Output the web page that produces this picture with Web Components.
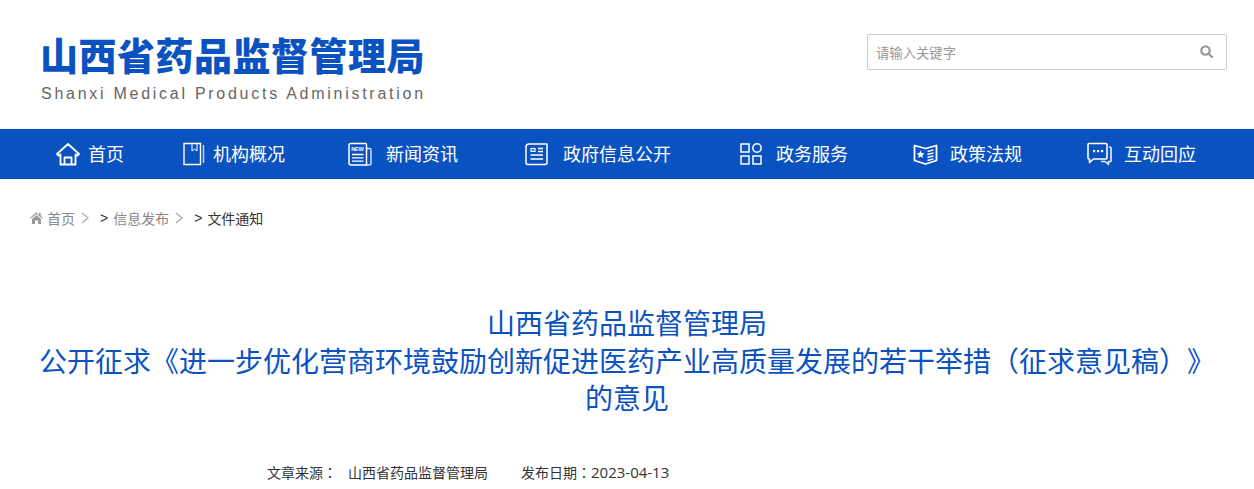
<!DOCTYPE html>
<html lang="zh-CN">
<head>
<meta charset="utf-8">
<title>山西省药品监督管理局</title>
<style>
  html, body { margin: 0; padding: 0; background: #fff; height: 489px; overflow: hidden; }
  body { font-family: "Noto Sans CJK SC", "Liberation Sans", sans-serif; color: #333; }
</style>
</head>
<body>
<site-header>
  <site-logo name="山西省药品监督管理局" en="Shanxi Medical Products Administration"></site-logo>
  <search-box placeholder="请输入关键字"></search-box>
</site-header>

<main-nav>
  <nav-item label="首页" w="127" gap="8">
    <svg slot="icon" width="24" height="24" viewBox="0 0 24 24" fill="none" stroke="#fff" stroke-width="1.800" stroke-linejoin="round" stroke-linecap="round"><path d="M1 12 12 2l11 10-1.800 1.800L19.500 12.500V22.500H4.500V12.500L2.800 13.800z"/><path d="M8.500 22v-6.500h7V22"/></svg>
  </nav-item>
  <nav-item label="机构概况" w="165" gap="8">
    <svg slot="icon" width="22" height="24" viewBox="0 0 22 24" fill="none" stroke="#fff" stroke-width="1.400"><path d="M1 1.500h16.500v21H1z"/><path d="M9 2v7l2.500-2L14 9V2" stroke-width="1"/><path d="M20.500 3v18" stroke-width="1.500" opacity=".75"/></svg>
  </nav-item>
  <nav-item label="新闻资讯" w="177" gap="14">
    <svg slot="icon" width="24" height="24" viewBox="0 0 24 24" fill="none" stroke="#fff" stroke-width="1.500"><path d="M2.500 1.500h15a1 1 0 0 1 1 1V23H3a2 2 0 0 1-2-2V3a1.500 1.500 0 0 1 1.500-1.500z"/><path d="M18.500 6.500h3a1.500 1.500 0 0 1 1.500 1.500V21a2 2 0 0 1-2 2h-2.500" opacity=".8"/><text x="3.200" y="9" font-family="Liberation Sans" font-size="5.500" font-weight="700" fill="#fff" stroke="none" textLength="12.500">NEW</text><path d="M4 12.500h11.500M4 15.800h11.500M4 19.200h11.500" stroke-width="1.300"/></svg>
  </nav-item>
  <nav-item label="政府信息公开" w="215" gap="15">
    <svg slot="icon" width="23" height="24" viewBox="0 0 23 24" fill="none" stroke="#fff" stroke-width="1.500"><path d="M4 2h18v18.500a2 2 0 0 1-2 2H3a2 2 0 0 1-2-2V5a3 3 0 0 1 3-3z" stroke-linejoin="round"/><rect x="6" y="6.500" width="4" height="2.800" stroke-width="1.200"/><path d="M13 6.500h5M13 9.500h5M5.500 13h12.500M5.500 17h12.500" stroke-width="1.300"/></svg>
  </nav-item>
  <nav-item label="政务服务" w="173" gap="14">
    <svg slot="icon" width="22" height="22" viewBox="0 0 22 22" fill="none" stroke="#fff" stroke-width="1.500"><rect x="1" y="1" width="8" height="8"/><circle cx="17" cy="5" r="4.200"/><rect x="1" y="13" width="8" height="8"/><rect x="13" y="13" width="8" height="8"/></svg>
  </nav-item>
  <nav-item label="政策法规" w="174" gap="12">
    <svg slot="icon" width="25" height="24" viewBox="0 0 25 24" fill="none" stroke="#fff" stroke-width="1.800"><path d="M1.500 3.500 12.500 6.500l11-3V18.500l-11 3.500-11-3.500z" stroke-linejoin="round"/><path d="m7.500 8.500 1.200 2.600 2.800.3-2.100 1.800.7 2.700-2.600-1.500-2.500 1.500.7-2.700-2.100-1.800 2.700-.3z" fill="#fff" stroke="none"/><path d="m14.500 9.500 6-1.600M14.500 12.500l6-1.600M14.500 15.500l6-1.600M14.500 18.500l6-1.600" stroke-width="1.500"/></svg>
  </nav-item>
  <nav-item label="互动回应" w="167" gap="12">
    <svg slot="icon" width="25" height="24" viewBox="0 0 25 24" fill="none" stroke="#fff" stroke-width="1.600" stroke-linejoin="round"><path d="M2 1.500h17a1 1 0 0 1 1 1V16a1 1 0 0 1-1 1H6.500L2.500 20.500V17H2a1 1 0 0 1-1-1V2.500a1 1 0 0 1 1-1z"/><path d="M22 5h1a1 1 0 0 1 1 1v13.500h-2.500v3L18 19.500h-4" opacity=".9"/><g fill="#fff" stroke="none"><rect x="6" y="8" width="2.200" height="2.200"/><rect x="10" y="8" width="2.200" height="2.200"/><rect x="14" y="8" width="2.200" height="2.200"/></g></svg>
  </nav-item>
</main-nav>

<bread-crumb>
  <crumb-link label="首页" home></crumb-link>
  <crumb-link label="信息发布"></crumb-link>
  <crumb-link label="文件通知" current></crumb-link>
</bread-crumb>

<article-head>
  <span slot="title">山西省药品监督管理局<br>公开征求《进一步优化营商环境鼓励创新促进医药产业高质量发展的若干举措（征求意见稿）》<br>的意见</span>
  <span slot="source">山西省药品监督管理局</span>
  <span slot="date">2023-04-13</span>
</article-head>

<script>
// === header ===
class SiteHeader extends HTMLElement {
  constructor() {
    super();
    this.attachShadow({ mode: 'open' });
    this.shadowRoot.innerHTML = `
      <style>
        :host {
          display: flex;
          justify-content: space-between;
          box-sizing: border-box;
          height: 129px;
          padding: 34px 27px 0 41px;
        }
      </style>
      <slot></slot>
    `;
  }
}

class SiteLogo extends HTMLElement {
  constructor() {
    super();
    this.attachShadow({ mode: 'open' });
    this.shadowRoot.innerHTML = `
      <style>
        :host { display: block; }
        .cn {
          font-size: 38px;
          line-height: 46px;
          font-weight: 900;
          letter-spacing: 0.5px;
          color: #0b52c1;
          white-space: nowrap;
          margin: -3px 0 0 -1px;
        }
        .en {
          margin-top: 6px;
          font-family: "Liberation Sans", sans-serif;
          font-size: 16px;
          line-height: 22px;
          letter-spacing: 2.73px;
          color: #666;
          white-space: nowrap;
        }
      </style>
      <div class="cn"></div>
      <div class="en"></div>
    `;
  }
  connectedCallback() {
    this.shadowRoot.querySelector('.cn').textContent = this.getAttribute('name');
    this.shadowRoot.querySelector('.en').textContent = this.getAttribute('en');
  }
}

class SearchBox extends HTMLElement {
  constructor() {
    super();
    this.attachShadow({ mode: 'open' });
    this.shadowRoot.innerHTML = `
      <style>
        :host {
          display: flex;
          align-items: center;
          box-sizing: border-box;
          width: 360px;
          height: 36px;
          padding: 0 13px 0 8px;
          border: 1px solid #ccc;
          border-radius: 2px;
          background: #fff;
        }
        input {
          flex: 1;
          min-width: 0;
          border: 0;
          outline: 0;
          padding: 0;
          background: none;
          font: 13.333px "Noto Sans CJK SC", sans-serif;
        }
        input::placeholder { color: #999; opacity: 1; }
        svg { display: block; margin-top: -2px; }
      </style>
      <input type="text">
      <svg width="13" height="13" viewBox="0 0 13 13" fill="none" stroke="#999" stroke-width="2.200"><circle cx="5.500" cy="5.500" r="4.200"/><path d="m8.500 8.500 3.600 3.600" stroke-linecap="round"/></svg>
    `;
  }
  connectedCallback() {
    this.shadowRoot.querySelector('input').placeholder = this.getAttribute('placeholder') || '';
  }
}

// === nav ===
class MainNav extends HTMLElement {
  constructor() {
    super();
    this.attachShadow({ mode: 'open' });
    this.shadowRoot.innerHTML = `
      <style>
        :host {
          display: flex;
          box-sizing: border-box;
          height: 50px;
          padding-left: 56px;
          background: #0b52c1;
        }
      </style>
      <slot></slot>
    `;
  }
}

class NavItem extends HTMLElement {
  constructor() {
    super();
    this.attachShadow({ mode: 'open' });
    this.shadowRoot.innerHTML = `
      <style>
        :host {
          display: flex;
          align-items: center;
          flex: none;
          color: #fff;
          font-size: 18px;
          white-space: nowrap;
        }
        ::slotted(svg) { display: block; flex: none; }
        .label { padding-bottom: 2px; }
      </style>
      <slot name="icon"></slot>
      <span class="label"></span>
    `;
  }
  connectedCallback() {
    this.style.width = this.getAttribute('w') + 'px';
    const label = this.shadowRoot.querySelector('.label');
    label.textContent = this.getAttribute('label');
    label.style.marginLeft = this.getAttribute('gap') + 'px';
  }
}

// === breadcrumb ===
class BreadCrumb extends HTMLElement {
  constructor() {
    super();
    this.attachShadow({ mode: 'open' });
    this.shadowRoot.innerHTML = `
      <style>
        :host {
          display: flex;
          align-items: center;
          height: 20px;
          margin-top: 29px;
          padding-left: 30px;
          font-size: 14px;
        }
      </style>
      <slot></slot>
    `;
  }
}

class CrumbLink extends HTMLElement {
  constructor() {
    super();
    this.attachShadow({ mode: 'open' });
    this.shadowRoot.innerHTML = `
      <style>
        :host { display: flex; align-items: center; color: #888; }
        :host([current]) { color: #333; }
        svg { display: block; flex: none; }
        .lead, .tail { display: flex; align-items: center; }
        .home { margin-right: 4px; }
        .sep { margin-right: 5px; color: #333; font-family: "Liberation Sans", sans-serif; }
        .chev { margin: 0 11px 0 6px; }
      </style>
      <span class="lead"></span>
      <span class="label"></span>
      <span class="tail"></span>
    `;
  }
  connectedCallback() {
    const root = this.shadowRoot;
    root.querySelector('.label').textContent = this.getAttribute('label');
    if (this.hasAttribute('home')) {
      root.querySelector('.lead').innerHTML = `<svg class="home" width="13" height="12" viewBox="0 0 13 12" fill="#999"><path d="M6.500 0 0 6l.8.8L6.500 1.800l5.700 5 .8-.8-2.300-2.100V.8H9v2.400z"/><path d="M6.500 3 2 7v5h3V8.500h3V12h3V7z"/></svg>`;
    } else {
      root.querySelector('.lead').innerHTML = `<span class="sep">&gt;</span>`;
    }
    if (!this.hasAttribute('current')) {
      root.querySelector('.tail').innerHTML = `<svg class="chev" width="8" height="12" viewBox="0 0 8 12" fill="none" stroke="#aaa" stroke-width="1.200"><path d="m1 1 6 5-6 5"/></svg>`;
    }
  }
}

// === article heading ===
class ArticleHead extends HTMLElement {
  constructor() {
    super();
    this.attachShadow({ mode: 'open' });
    this.shadowRoot.innerHTML = `
      <style>
        :host { display: block; }
        h1 {
          margin: 76px 0 0;
          font-size: 28px;
          font-weight: 400;
          line-height: 37.5px;
          text-align: center;
          color: #0b52c1;
          text-spacing-trim: space-all;
          font-kerning: none;
        }
        .meta {
          display: flex;
          margin-top: 45px;
          padding-left: 267px;
          font-size: 14px;
          line-height: 20px;
          color: #333;
        }
        .source { margin-right: 33px; }
        .gap { margin-left: 11px; }
        .colon { font-family: "Noto Sans CJK TC", sans-serif; }
        .date ::slotted(span) { font-family: "Open Sans", sans-serif; font-size: 15px; }
      </style>
      <h1><slot name="title"></slot></h1>
      <div class="meta">
        <div class="source">文章来源<span class="colon" lang="zh-TW">：</span><span class="gap"><slot name="source"></slot></span></div>
        <div class="date">发布日期<span class="colon" lang="zh-TW">：</span><slot name="date"></slot></div>
      </div>
    `;
  }
}

customElements.define('site-header', SiteHeader);
customElements.define('site-logo', SiteLogo);
customElements.define('search-box', SearchBox);
customElements.define('main-nav', MainNav);
customElements.define('nav-item', NavItem);
customElements.define('bread-crumb', BreadCrumb);
customElements.define('crumb-link', CrumbLink);
customElements.define('article-head', ArticleHead);
</script>
</body>
</html>
